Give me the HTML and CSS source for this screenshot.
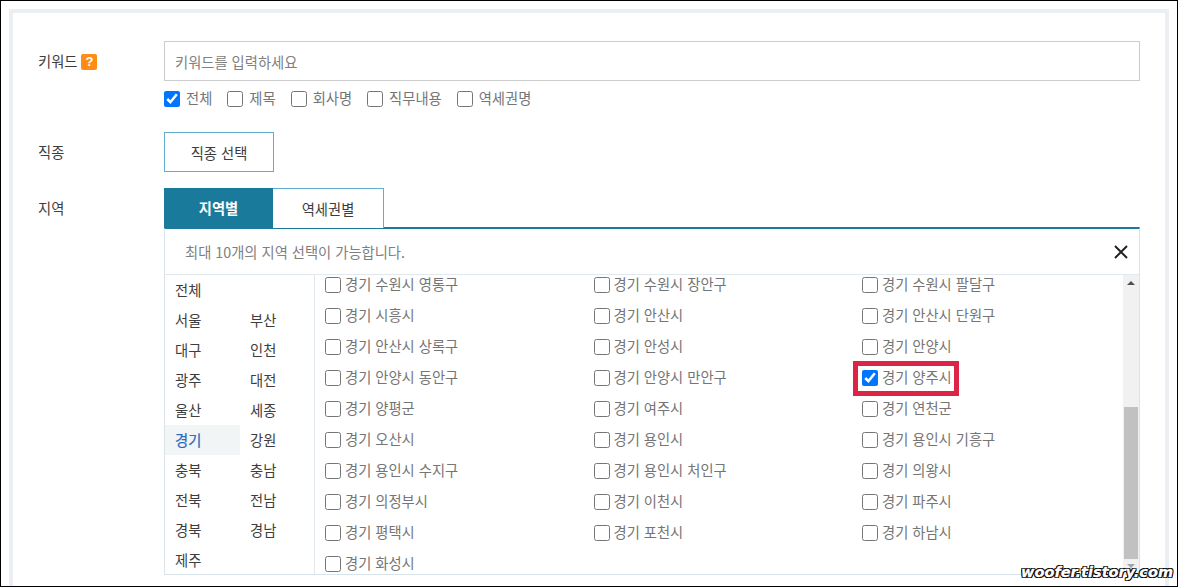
FILE: index.html
```html
<!DOCTYPE html>
<html lang="ko">
<head>
    <meta charset="UTF-8">
    <title>채용정보 검색</title>
    <link rel="stylesheet" href="styles.css">
</head>
<body>
    <div class="frame">
        <div class="panel">
            <div class="row row-keyword">
                <div class="row-label">키워드 <span class="help">?</span></div>
                <div class="row-field">
                    <input type="text" class="keyword-input" placeholder="키워드를 입력하세요">
                    <div class="scope">
                        <label class="check"><input type="checkbox" checked>전체</label>
                        <label class="check"><input type="checkbox">제목</label>
                        <label class="check"><input type="checkbox">회사명</label>
                        <label class="check"><input type="checkbox">직무내용</label>
                        <label class="check"><input type="checkbox">역세권명</label>
                    </div>
                </div>
            </div>
            <div class="row row-job">
                <div class="row-label">직종</div>
                <div class="row-field">
                    <button class="job-button">직종 선택</button>
                </div>
            </div>
            <div class="row">
                <div class="row-label">지역</div>
                <div class="row-field">
                    <div class="tabs">
                        <div class="tab tab-on">지역별</div>
                        <div class="tab">역세권별</div>
                    </div>
                    <div class="area-box">
                        <div class="area-head">
                            <span>최대 10개의 지역 선택이 가능합니다.</span>
                            <svg class="close" width="14" height="14" viewBox="0 0 14 14"><path d="M1 1L13 13M13 1L1 13" stroke="#222" stroke-width="2" fill="none"/></svg>
                        </div>
                        <div class="area-body">
                            <div class="sido">
                                <div class="sido-item">전체</div><div class="sido-item"></div>
                                <div class="sido-item">서울</div><div class="sido-item">부산</div>
                                <div class="sido-item">대구</div><div class="sido-item">인천</div>
                                <div class="sido-item">광주</div><div class="sido-item">대전</div>
                                <div class="sido-item">울산</div><div class="sido-item">세종</div>
                                <div class="sido-item sido-on">경기</div><div class="sido-item">강원</div>
                                <div class="sido-item">충북</div><div class="sido-item">충남</div>
                                <div class="sido-item">전북</div><div class="sido-item">전남</div>
                                <div class="sido-item">경북</div><div class="sido-item">경남</div>
                                <div class="sido-item">제주</div><div class="sido-item"></div>
                            </div>
                            <div class="gugun">
                                <label class="check"><input type="checkbox">경기 수원시 영통구</label>
                                <label class="check"><input type="checkbox">경기 수원시 장안구</label>
                                <label class="check"><input type="checkbox">경기 수원시 팔달구</label>
                                <label class="check"><input type="checkbox">경기 시흥시</label>
                                <label class="check"><input type="checkbox">경기 안산시</label>
                                <label class="check"><input type="checkbox">경기 안산시 단원구</label>
                                <label class="check"><input type="checkbox">경기 안산시 상록구</label>
                                <label class="check"><input type="checkbox">경기 안성시</label>
                                <label class="check"><input type="checkbox">경기 안양시</label>
                                <label class="check"><input type="checkbox">경기 안양시 동안구</label>
                                <label class="check"><input type="checkbox">경기 안양시 만안구</label>
                                <label class="check check-marked"><input type="checkbox" checked>경기 양주시</label>
                                <label class="check"><input type="checkbox">경기 양평군</label>
                                <label class="check"><input type="checkbox">경기 여주시</label>
                                <label class="check"><input type="checkbox">경기 연천군</label>
                                <label class="check"><input type="checkbox">경기 오산시</label>
                                <label class="check"><input type="checkbox">경기 용인시</label>
                                <label class="check"><input type="checkbox">경기 용인시 기흥구</label>
                                <label class="check"><input type="checkbox">경기 용인시 수지구</label>
                                <label class="check"><input type="checkbox">경기 용인시 처인구</label>
                                <label class="check"><input type="checkbox">경기 의왕시</label>
                                <label class="check"><input type="checkbox">경기 의정부시</label>
                                <label class="check"><input type="checkbox">경기 이천시</label>
                                <label class="check"><input type="checkbox">경기 파주시</label>
                                <label class="check"><input type="checkbox">경기 평택시</label>
                                <label class="check"><input type="checkbox">경기 포천시</label>
                                <label class="check"><input type="checkbox">경기 하남시</label>
                                <label class="check"><input type="checkbox">경기 화성시</label>
                            </div>
                            <div class="scrollbar">
                                <span class="arrow-up"></span>
                                <span class="thumb"></span>
                                <span class="arrow-down"></span>
                            </div>
                        </div>
                    </div>
                </div>
            </div>
        </div>
        <div class="watermark">woofer.tistory.com</div>
    </div>
</body>
</html>
```

FILE: styles.css
```css
* {
    box-sizing: border-box;
}
body {
    margin: 0;
    font-family: "Noto Sans CJK KR", "Noto Sans", sans-serif;
    font-size: 14.3px;
    color: #333;
    background-color: #fff;
}
.frame {
    position: relative;
    width: 1178px;
    height: 587px;
    padding: 8px 8px 0 8px;
    border: 1px solid #000;
    overflow: hidden;
}
.panel {
    height: 640px;
    padding: 28px 25px 0 25px;
    border: 4px solid #ebeff3;
    background-color: #fff;
}
.row {
    display: flex;
}
.row-keyword {
    margin-bottom: 25px;
}
.row-job {
    margin-bottom: 16px;
}
.row-label {
    width: 126px;
    flex-shrink: 0;
    line-height: 40px;
    color: #3d3d3d;
}
.row-field {
    flex: 1;
    min-width: 0;
}
.help {
    display: inline-block;
    width: 16px;
    height: 16px;
    margin-left: 0;
    border-radius: 2px;
    background-color: #ff8c14;
    color: #fff;
    font-family: "Liberation Sans", sans-serif;
    font-size: 13px;
    font-weight: bold;
    line-height: 16px;
    text-align: center;
    vertical-align: 1px;
}
.keyword-input {
    display: block;
    width: 100%;
    height: 40px;
    padding: 0 10px;
    border: 1px solid #ccc;
    font-family: inherit;
    font-size: 14.3px;
    outline: none;
}
.keyword-input::placeholder {
    color: #808080;
}
.scope {
    display: flex;
    gap: 15px;
    margin-top: 10px;
}
.check {
    display: flex;
    align-items: flex-start;
    height: 16px;
    line-height: 14px;
    color: #757575;
    white-space: nowrap;
}
.check input {
    width: 16px;
    height: 16px;
    margin: 0 6px 0 0;
    flex-shrink: 0;
}
.job-button {
    display: block;
    width: 110px;
    height: 40px;
    padding: 0;
    border: 1px solid #5fb0cc;
    background-color: #fff;
    color: #3d3d3d;
    font-family: inherit;
    font-size: 14.3px;
}
.tabs {
    display: flex;
    height: 40px;
}
.tab {
    width: 111px;
    border: 1px solid #5fb0cc;
    border-left: none;
    border-bottom: none;
    background-color: #fff;
    color: #3d3d3d;
    line-height: 39px;
    text-align: center;
}
.tab-on {
    width: 109px;
    background-color: #1a7a9c;
    border: none;
    color: #fff;
    font-weight: bold;
}
.area-box {
    height: 348px;
    border: 1px solid #d8e3ea;
    border-top: 2px solid #1a7a9c;
    margin-top: -1px;
}
.area-head {
    display: flex;
    justify-content: space-between;
    align-items: center;
    height: 46px;
    padding: 0 11px 0 20px;
    border-bottom: 1px solid #e2e9ee;
    color: #808080;
}
.area-body {
    display: flex;
    height: 299px;
}
.sido {
    display: grid;
    grid-template-columns: 75px 75px;
    grid-auto-rows: 30px;
    width: 150px;
    flex-shrink: 0;
    border-right: 1px solid #e2e9ee;
}
.sido-item {
    padding-left: 10px;
    line-height: 30px;
    color: #3d3d3d;
}
.sido-on {
    background-color: #f2f5f6;
    color: #2a6cc0;
    -webkit-text-stroke: 0.25px #2a6cc0;
}
.gugun {
    flex: 1;
    display: grid;
    grid-template-columns: 268.5px 268.5px 1fr;
    grid-auto-rows: 31px;
    padding: 2px 0 0 10px;
    align-content: start;
}
.gugun .check input {
    margin-right: 4px;
}
.check-marked {
    position: relative;
    width: fit-content;
}
.check-marked::after {
    content: "";
    position: absolute;
    top: -9px;
    right: -7px;
    bottom: -10px;
    left: -9px;
    border: 5px solid #dc2446;
}
.scrollbar {
    display: flex;
    flex-direction: column;
    align-items: center;
    width: 16px;
    flex-shrink: 0;
    background-color: #f1f1f1;
}
.arrow-up {
    margin-top: 6px;
    border-left: 4px solid transparent;
    border-right: 4px solid transparent;
    border-bottom: 4px solid #505050;
}
.thumb {
    width: 14px;
    height: 152px;
    margin-top: 122px;
    background-color: #c1c1c1;
}
.arrow-down {
    margin-top: 5px;
    border-left: 4px solid transparent;
    border-right: 4px solid transparent;
    border-top: 4px solid #a3a3a3;
}
.watermark {
    position: absolute;
    right: 4px;
    bottom: 5px;
    font-family: "DejaVu Sans", sans-serif;
    font-size: 14.5px;
    font-style: italic;
    font-weight: bold;
    line-height: 18px;
    color: #fff;
    -webkit-text-stroke: 0.3px #fff;
    text-shadow: -1px -1px 0 #000, 1px -1px 0 #000, -1px 1px 0 #000, 1px 1px 0 #000, 0 -1px 0 #000, 0 1px 0 #000, -1px 0 0 #000, 1px 0 0 #000;
}
```
